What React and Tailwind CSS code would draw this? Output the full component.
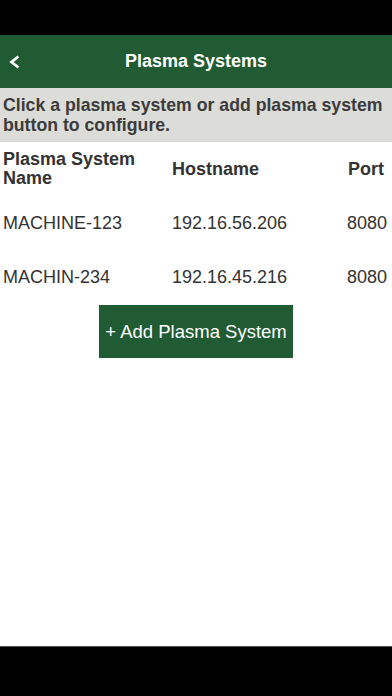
const rows = [
  { name: 'MACHINE-123', host: '192.16.56.206', port: '8080' },
  { name: 'MACHIN-234', host: '192.16.45.216', port: '8080' },
];

export default function App() {
  return (
    <div className="w-[392px] h-[696px] flex flex-col bg-black font-['Liberation_Sans',Arial,sans-serif]">
      <div className="h-[35px]"></div>
      <div className="h-[53px] bg-[#215b34] flex items-center relative">
        <svg className="absolute left-[8px] top-[20px]" width="13" height="14" viewBox="0 0 13 14">
          <path d="M10.5 1.5 L3.5 7 L10.5 12.5" fill="none" stroke="white" strokeWidth="2.8" />
        </svg>
        <div className="flex-1 text-center text-white font-bold text-[18px]">Plasma Systems</div>
      </div>
      <div className="flex-1 bg-white flex flex-col">
        <div className="h-[54px] bg-[#dcdcd8] pl-[3px] pt-[7px] text-[#3b3b3b] font-bold text-[17.7px] leading-[20px]">
          Click a plasma system or add plasma system button to configure.
        </div>
        <div className="grid grid-cols-[172px_1fr_auto] pr-[5px]">
          <div className="h-[54px] flex items-center pl-[3px] font-bold text-[18px] leading-[19px] text-[#333]">
            Plasma System<br />Name
          </div>
          <div className="h-[54px] flex items-center font-bold text-[18px] text-[#333]">Hostname</div>
          <div className="h-[54px] flex items-center justify-end font-bold text-[18px] text-[#333] pr-[3px]">Port</div>
          {rows.map((r) => (
            <>
              <div key={r.name + 'n'} className="h-[54px] flex items-center pl-[3px] text-[18px] text-[#333]">{r.name}</div>
              <div key={r.name + 'h'} className="h-[54px] flex items-center text-[18px] text-[#333]">{r.host}</div>
              <div key={r.name + 'p'} className="h-[54px] flex items-center justify-end text-[18px] text-[#333]">{r.port}</div>
            </>
          ))}
        </div>
        <div className="flex justify-center pt-[1px]">
          <button className="w-[194px] h-[53px] bg-[#215b34] text-white text-[18.5px] flex items-center justify-center">
            + Add Plasma System
          </button>
        </div>
      </div>
      <div className="h-[50px] border-t border-[#555]"></div>
    </div>
  );
}
